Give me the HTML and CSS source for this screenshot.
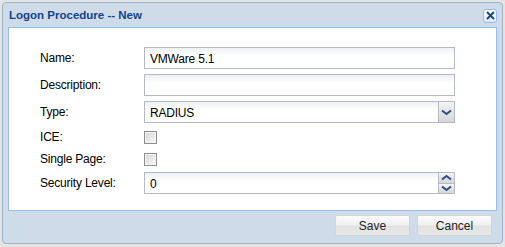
FILE: index.html
```html
<!DOCTYPE html>
<html lang="en">
<head>
    <meta charset="UTF-8">
    <title>Logon Procedure -- New</title>
    <link rel="stylesheet" href="styles.css">
</head>
<body>
    <div class="window">
        <div class="window-header">
            <span class="window-title">Logon Procedure -- New</span>
            <button class="tool-close" title="Close">
                <svg width="9" height="9" viewBox="0 0 9 9"><path d="M1 1L8 8M8 1L1 8" stroke="#15428b" stroke-width="1.8"/></svg>
            </button>
        </div>

        <div class="window-body">
            <form class="form">
                <label class="field-label">Name:</label>
                <div class="field"><input class="text-field" type="text" value="VMWare 5.1"></div>

                <label class="field-label">Description:</label>
                <div class="field"><input class="text-field" type="text" value=""></div>

                <label class="field-label">Type:</label>
                <div class="field combo">
                    <input class="text-field" type="text" value="RADIUS" readonly>
                    <span class="trigger">
                        <svg width="11" height="7" viewBox="0 0 11 7"><path d="M1 1.5L5.5 5L10 1.5" stroke="#2c4f8c" stroke-width="2" fill="none"/></svg>
                    </span>
                </div>

                <label class="field-label">ICE:</label>
                <div class="field check"><span class="checkbox"></span></div>

                <label class="field-label">Single Page:</label>
                <div class="field check"><span class="checkbox"></span></div>

                <label class="field-label">Security Level:</label>
                <div class="field combo">
                    <input class="text-field" type="text" value="0">
                    <span class="spinner">
                        <span class="spin-up">
                            <svg width="11" height="7" viewBox="0 0 11 7"><path d="M1 5.5L5.5 2L10 5.5" stroke="#2c4f8c" stroke-width="2" fill="none"/></svg>
                        </span>
                        <span class="spin-down">
                            <svg width="11" height="7" viewBox="0 0 11 7"><path d="M1 1.5L5.5 5L10 1.5" stroke="#2c4f8c" stroke-width="2" fill="none"/></svg>
                        </span>
                    </span>
                </div>
            </form>
        </div>

        <div class="window-footer">
            <button class="btn" type="button">Save</button>
            <button class="btn" type="button">Cancel</button>
        </div>
    </div>
</body>
</html>
```

FILE: styles.css
```css
body {
    margin: 0;
    padding: 2px;
    background: #e4e4e4;
    font-family: 'Liberation Sans', Arial, sans-serif;
    font-size: 12px;
    color: #000;
}

.window {
    width: 501px;
    height: 242px;
    background: #cedbe8;
    border: 1px solid #9fb3cc;
    border-radius: 4px;
    box-sizing: border-box;
    display: flex;
    flex-direction: column;
    padding: 0 5px;
}

.window-header {
    height: 24px;
    display: flex;
    align-items: center;
    justify-content: space-between;
    padding-left: 1px;
}

.window-title {
    font-weight: bold;
    font-size: 11.5px;
    color: #15428b;
}

.tool-close {
    width: 14px;
    height: 14px;
    padding: 0;
    margin-right: 0;
    margin-top: 1px;
    border: 1px solid #99bbe8;
    border-radius: 3px;
    background: linear-gradient(#ffffff, #dde7f3);
    display: flex;
    align-items: center;
    justify-content: center;
}

.window-body {
    background: #fff;
    border: 1px solid #99bbe8;
    height: 184px;
    box-sizing: border-box;
}

.form {
    display: grid;
    grid-template-columns: 104px 311px;
    row-gap: 5px;
    padding: 19px 0 0 31px;
    align-items: center;
}

.field-label {
    letter-spacing: -0.2px;
    color: #000;
}

.field {
    display: flex;
    align-items: center;
}

.check {
    height: 17px;
    align-items: flex-start;
}

.text-field {
    width: 100%;
    height: 22px;
    box-sizing: border-box;
    border: 1px solid #b5b8c8;
    background: linear-gradient(#eef0f3, #ffffff 8px);
    padding: 1px 5px 0;
    font-family: 'Liberation Sans', Arial, sans-serif;
    font-size: 12px;
    letter-spacing: -0.2px;
    color: #000;
    outline: none;
}

.combo .text-field {
    border-right: none;
}

.trigger {
    width: 17px;
    height: 22px;
    flex: none;
    box-sizing: border-box;
    border: 1px solid #b5b8c8;
    background: linear-gradient(#f4f4f4, #d6d6d6);
    display: flex;
    align-items: center;
    justify-content: center;
}

.spinner {
    width: 17px;
    height: 22px;
    flex: none;
    box-sizing: border-box;
    border: 1px solid #b5b8c8;
    display: flex;
    flex-direction: column;
}

.spin-up, .spin-down {
    flex: 1;
    background: linear-gradient(#f4f4f4, #d6d6d6);
    display: flex;
    align-items: center;
    justify-content: center;
}

.spin-up {
    border-bottom: 1px solid #b5b8c8;
}

.checkbox {
    width: 13px;
    height: 13px;
    box-sizing: border-box;
    border: 1px solid #8e8f8f;
    box-shadow: inset 0 0 0 1px #f4f4f4;
    background: linear-gradient(135deg, #d4d4d4, #fbfbfb);
    margin-top: 3px;
}

.window-footer {
    flex: 1;
    display: flex;
    justify-content: flex-end;
    align-items: flex-start;
    gap: 7px;
    padding: 4px 5px 0 0;
}

.btn {
    width: 75px;
    height: 21px;
    border: 1px solid #d4d4d4;
    border-radius: 2px;
    background: linear-gradient(#fbfbfb 0%, #f0f0f0 45%, #e2e2e2 55%, #e8e8e8 100%);
    font-family: 'Liberation Sans', Arial, sans-serif;
    font-size: 12px;
    color: #222;
    padding: 0;
}
```
